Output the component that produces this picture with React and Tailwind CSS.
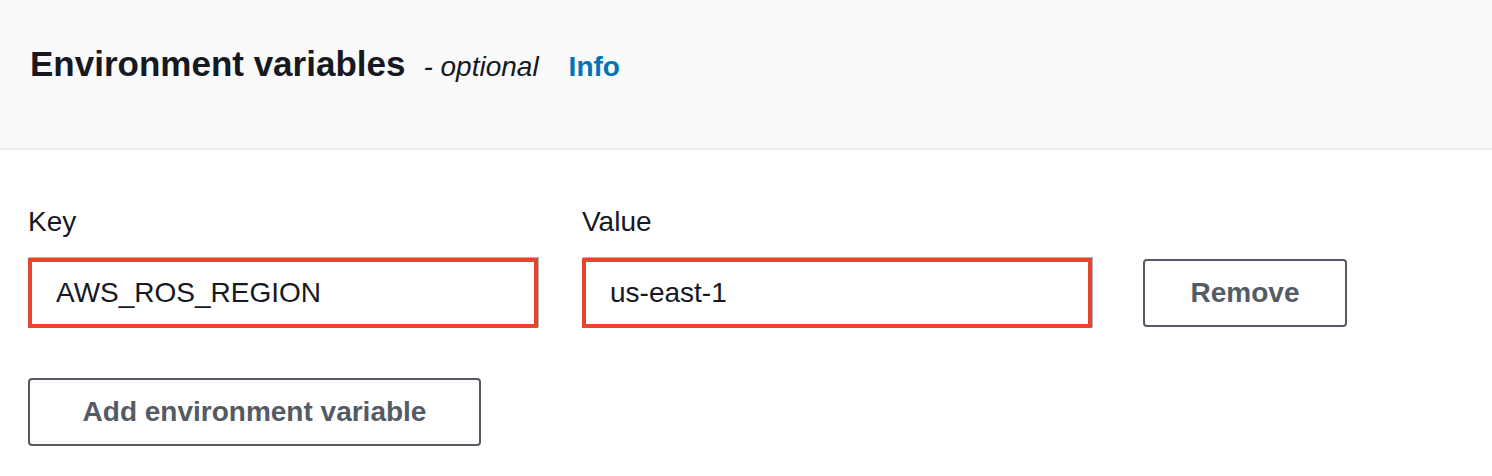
import React from "react";

const font = { fontFamily: '"Liberation Sans", Arial, sans-serif' };

const Field = ({ label, value }) => (
  <div className="flex flex-col w-[510px]">
    <label className="text-[28px] leading-[40px] text-[#16191f] mb-[16px]">{label}</label>
    <div className="h-[70px] border-[4px] border-[#e8452c] shadow-[1px_-1px_0_#aab7b8] flex items-center px-[24px] bg-white">
      <span className="text-[28px] leading-[40px] text-[#16191f]">{value}</span>
    </div>
  </div>
);

const Button = ({ children, className = "" }) => (
  <button
    className={`h-[68px] border-2 border-[#545b64] rounded-[4px] bg-white text-[#545b64] text-[28px] font-bold leading-[40px] flex items-center justify-center ${className}`}
  >
    {children}
  </button>
);

export default function App() {
  return (
    <div className="w-[1492px] h-[476px] bg-white overflow-hidden" style={font}>
      {/* header */}
      <div className="h-[150px] bg-[#fafafa] border-b-2 border-[#eaeded] pt-[43px] px-[30px]">
        <div className="flex items-baseline">
          <h2 className="text-[35px] leading-[42px] font-bold text-[#16191f]">Environment variables</h2>
          <span className="ml-[18px] text-[28px] italic text-[#16191f]">- optional</span>
          <a className="ml-[30px] text-[28px] font-bold text-[#0073bb]">Info</a>
        </div>
      </div>

      {/* body */}
      <div className="px-[28px] pt-[52px]">
        <div className="flex items-end">
          <Field label="Key" value="AWS_ROS_REGION" />
          <div className="w-[44px]" />
          <Field label="Value" value="us-east-1" />
          <Button className="ml-[51px] w-[204px] mb-[1px]">Remove</Button>
        </div>
        <Button className="mt-[50px] w-[453px]">Add environment variable</Button>
      </div>
    </div>
  );
}
